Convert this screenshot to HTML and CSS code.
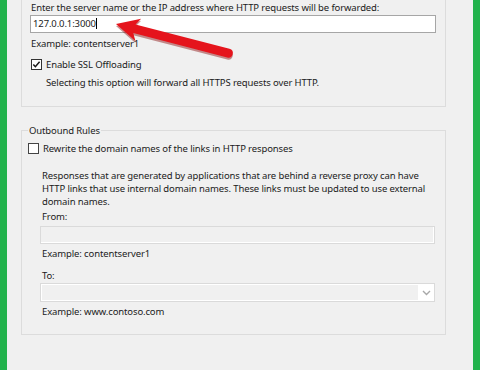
FILE: index.html
```html
<!DOCTYPE html>
<html lang="en">
<head>
    <meta charset="UTF-8">
    <title>Reverse Proxy Rules</title>
    <link rel="stylesheet" href="styles.css">
</head>
<body>
    <div class="edge"></div>
    <div class="main">
        <div class="group top-group">
            <div class="label">Enter the server name or the IP address where HTTP requests will be forwarded:</div>
            <div class="textbox">127.0.0.1:3000<span class="caret"></span></div>
            <div class="hint">Example: contentserver1</div>
            <div class="check-row ssl-row">
                <svg class="checkbox" width="11" height="11" viewBox="0 0 11 11">
                    <rect x="0.5" y="0.5" width="10" height="10" fill="#fff" stroke="#333"/>
                    <path d="M2.3 5.4 L4.4 7.7 L8.6 2.8" fill="none" stroke="#1a1a1a" stroke-width="1.5"/>
                </svg>
                <span>Enable SSL Offloading</span>
            </div>
            <div class="note">Selecting this option will forward all HTTPS requests over HTTP.</div>
        </div>

        <fieldset class="group outbound">
            <legend>Outbound Rules</legend>
            <div class="check-row">
                <svg class="checkbox" width="11" height="11" viewBox="0 0 11 11">
                    <rect x="0.5" y="0.5" width="10" height="10" fill="#fff" stroke="#444"/>
                </svg>
                <span>Rewrite the domain names of the links in HTTP responses</span>
            </div>
            <div class="indent">
                <p class="desc">Responses that are generated by applications that are behind a reverse proxy can have<br>HTTP links that use internal domain names. These links must be updated to use external<br>domain names.</p>
                <div class="field-label">From:</div>
                <div class="textbox disabled"></div>
                <div class="hint">Example: contentserver1</div>
                <div class="field-label to-label">To:</div>
                <div class="combo">
                    <div class="combo-field"></div>
                    <div class="combo-btn">
                        <svg width="9" height="6" viewBox="0 0 9 6"><path d="M1 1 L4.5 4.5 L8 1" fill="none" stroke="#a8a8a8" stroke-width="1.4"/></svg>
                    </div>
                </div>
                <div class="hint">Example: www.contoso.com</div>
            </div>
        </fieldset>
    </div>
    <div class="edge"></div>

    <!-- callout arrow pointing at the typed address -->
    <svg class="arrow" width="480" height="370" viewBox="0 0 480 370">
        <g transform="translate(116 24) rotate(14.5)">
            <path d="M0 0 L23 -11.5 L19 -4.5 L116 -4.5 Q120.5 -4.5 120.5 0 Q120.5 4.5 116 4.5 L19 4.5 L23 11.5 Z" fill="#8a0c0c" opacity="0.45" transform="translate(0.5 2)"/>
            <path d="M0 0 L23 -11.5 L19 -4.5 L116 -4.5 Q120.5 -4.5 120.5 0 Q120.5 4.5 116 4.5 L19 4.5 L23 11.5 Z" fill="#e5141c"/>
        </g>
    </svg>
</body>
</html>
```

FILE: styles.css
```css
body {
    margin: 0;
    height: 370px;
    overflow: hidden;
    display: flex;
    background-color: #f0f0f0;
    font-family: "Noto Sans", "Open Sans", sans-serif;
    font-size: 9.5px;
    letter-spacing: -0.12px;
    line-height: 15px;
    color: #1b1b1b;
    white-space: nowrap;
}

.edge {
    width: 7px;
    background-color: #22b24c;
}

.main {
    flex: 1;
    padding: 0 27px 0 14px;
}

.group {
    border: 1px solid #dcdcdc;
}

.top-group {
    border-top: none;
    height: 106px;
    padding: 0 9px 0 8px;
}

.label {
    margin-left: 1px;
}

.textbox {
    height: 16px;
    border: 1px solid #a6a6a6;
    background-color: #fff;
    padding-left: 2px;
    line-height: 16px;
}

.caret {
    display: inline-block;
    width: 1px;
    height: 11px;
    vertical-align: -2px;
    background-color: #000;
}

.textbox.disabled {
    border-color: #dadada;
    background-color: #f0f0f0;
    box-shadow: inset -1px -1px 0 #fff;
}

.hint {
    margin-top: 3px;
    margin-left: 1px;
}

.check-row {
    display: flex;
    align-items: center;
    gap: 4px;
}

.ssl-row {
    margin-top: 6px;
    margin-left: 1px;
}

.note {
    margin: 3px 0 0 16px;
}

.outbound {
    margin: 16px 0 0 0;
    padding: 0 10px 15px 6px;
}

.outbound legend {
    padding: 0 1px;
    margin-left: 0;
}

.outbound .check-row {
    margin-top: 3px;
}

.indent {
    padding-left: 12px;
}

.desc {
    margin: 13px 0 0 2px;
    line-height: 13px;
}

.field-label {
    margin: 1px 0 2px 2px;
}

.to-label {
    margin-top: 7px;
    margin-bottom: 0;
}

.indent .hint {
    margin-top: 2px;
    margin-left: 2px;
}

.combo {
    border: 1px solid #dadada;
    background-color: #fff;
    padding: 1px 0 1px 1px;
    display: flex;
    box-sizing: border-box;
    height: 19px;
}

.combo-field {
    flex: 1;
    background-color: #f0f0f0;
}

.combo-btn {
    width: 16px;
    display: flex;
    align-items: center;
    justify-content: center;
}

.arrow {
    position: absolute;
    left: 0;
    top: 0;
    pointer-events: none;
}
```
